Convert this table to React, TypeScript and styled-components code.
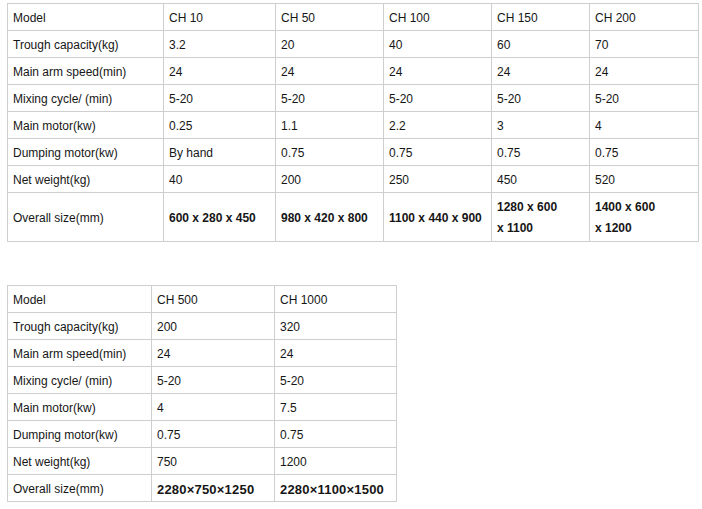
import React from 'react';
import styled, { createGlobalStyle } from 'styled-components';

const GlobalStyle = createGlobalStyle`
  body {
    margin: 0;
    background: #fff;
    font-family: Arial, 'Liberation Sans', sans-serif;
    color: #161616;
  }
`;

const Page = styled.div`
  padding: 3px 0 0 7px;
  overflow: hidden;
  height: 509px;
  box-sizing: border-box;
`;

const SpecTable = styled.table<{ $width: number; $gap?: number }>`
  border-collapse: collapse;
  table-layout: fixed;
  width: ${(p) => p.$width}px;
  margin-bottom: ${(p) => p.$gap ?? 0}px;
  font-size: 12px;
`;

const Row = styled.tr<{ $tall?: boolean }>`
  height: ${(p) => (p.$tall ? 49 : 27)}px;
`;

const Cell = styled.td<{ $strong?: boolean; $big?: boolean }>`
  border: 1px solid #cfcfcf;
  padding: 2px 5px 0;
  line-height: 21px;
  vertical-align: middle;
  font-weight: ${(p) => (p.$strong ? 700 : 400)};
  font-size: ${(p) => (p.$big ? '13px' : '12px')};
  letter-spacing: ${(p) => (p.$big ? '0.2px' : 'normal')};
  white-space: nowrap;
  overflow: hidden;
`;

const Heading = styled.div`
  margin: 7px 0 0 38px;
  color: #7a1fe0;
  font-weight: 700;
  font-size: 16px;
`;

type Spec = { label: string; values: string[]; tall?: boolean; strong?: boolean; big?: boolean };

const firstCols = [156, 112, 108, 108, 98, 109];
const firstRows: Spec[] = [
  { label: 'Model', values: ['CH 10', 'CH 50', 'CH 100', 'CH 150', 'CH 200'] },
  { label: 'Trough capacity(kg)', values: ['3.2', '20', '40', '60', '70'] },
  { label: 'Main arm speed(min)', values: ['24', '24', '24', '24', '24'] },
  { label: 'Mixing cycle/ (min)', values: ['5-20', '5-20', '5-20', '5-20', '5-20'] },
  { label: 'Main motor(kw)', values: ['0.25', '1.1', '2.2', '3', '4'] },
  { label: 'Dumping motor(kw)', values: ['By hand', '0.75', '0.75', '0.75', '0.75'] },
  { label: 'Net weight(kg)', values: ['40', '200', '250', '450', '520'] },
  {
    label: 'Overall size(mm)',
    values: ['600 x 280 x 450', '980 x 420 x 800', '1100 x 440 x 900', '1280 x 600\nx 1100', '1400 x 600\nx 1200'],
    tall: true,
    strong: true,
  },
];

const secondCols = [144, 123, 122];
const secondRows: Spec[] = [
  { label: 'Model', values: ['CH 500', 'CH 1000'] },
  { label: 'Trough capacity(kg)', values: ['200', '320'] },
  { label: 'Main arm speed(min)', values: ['24', '24'] },
  { label: 'Mixing cycle/ (min)', values: ['5-20', '5-20'] },
  { label: 'Main motor(kw)', values: ['4', '7.5'] },
  { label: 'Dumping motor(kw)', values: ['0.75', '0.75'] },
  { label: 'Net weight(kg)', values: ['750', '1200'] },
  { label: 'Overall size(mm)', values: ['2280×750×1250', '2280×1100×1500'], strong: true, big: true },
];

const Table = ({ cols, rows, gap }: { cols: number[]; rows: Spec[]; gap?: number }) => {
  const width = cols.reduce((a, b) => a + b, 0);
  return (
    <SpecTable $width={width} $gap={gap}>
      <colgroup>
        {cols.map((w, i) => (
          <col key={i} style={{ width: w }} />
        ))}
      </colgroup>
      <tbody>
        {rows.map((row) => (
          <Row key={row.label} $tall={row.tall}>
            <Cell>{row.label}</Cell>
            {row.values.map((v, i) => (
              <Cell key={i} $strong={row.strong} $big={row.big}>
                {v.split('\n').map((line, j) => (
                  <div key={j}>{line}</div>
                ))}
              </Cell>
            ))}
          </Row>
        ))}
      </tbody>
    </SpecTable>
  );
};

const App = () => (
  <>
    <GlobalStyle />
    <Page>
      <Table cols={firstCols} rows={firstRows} gap={43} />
      <Table cols={secondCols} rows={secondRows} />
      <Heading>Advantages</Heading>
    </Page>
  </>
);

export default App;
